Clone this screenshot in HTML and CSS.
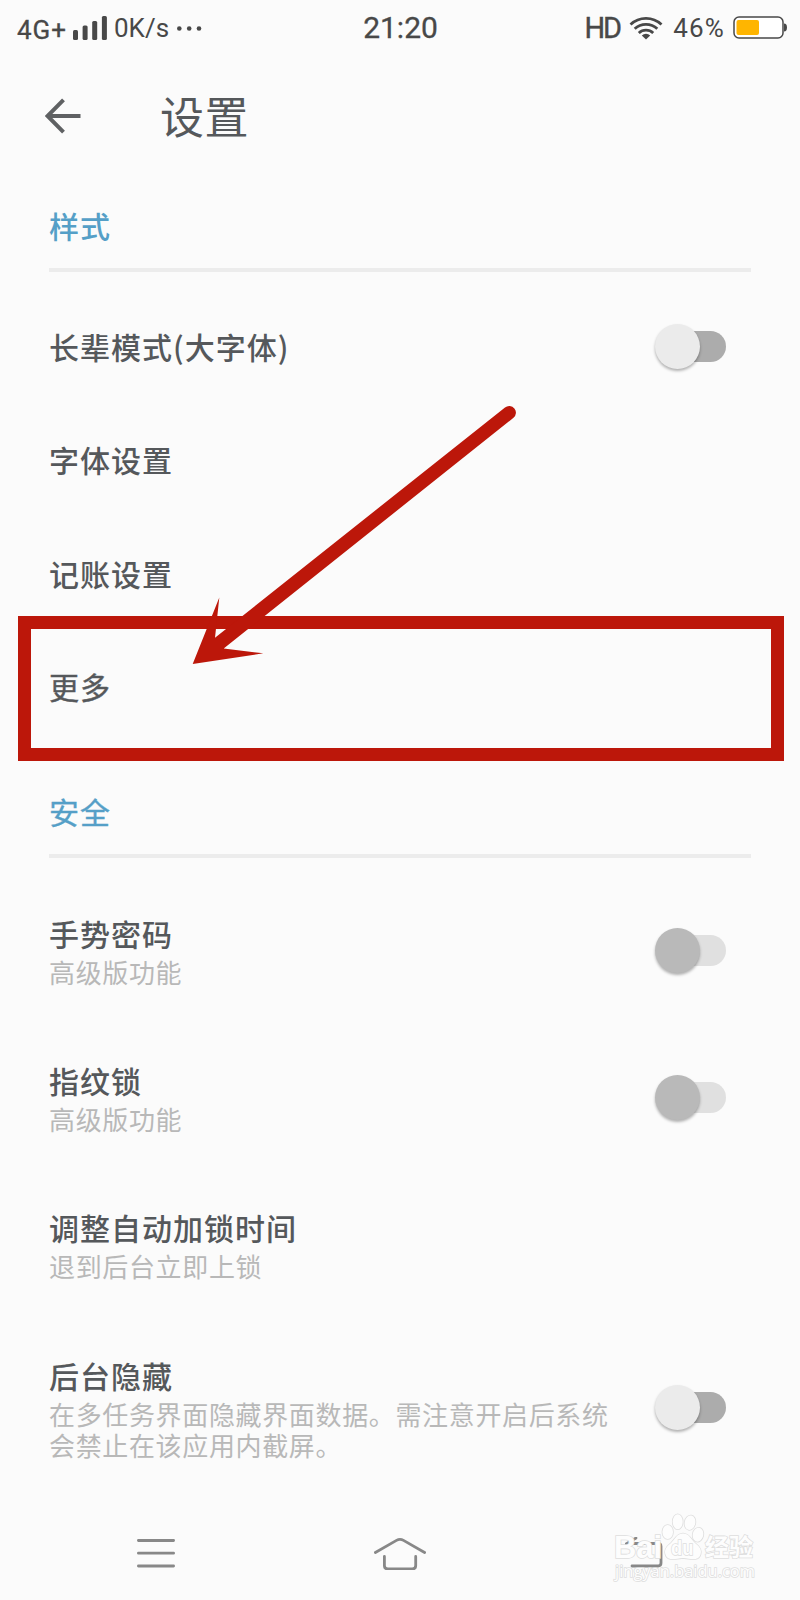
FILE: index.html
```html
<!doctype html>
<html lang="zh-CN">
    <head>
        <meta charset="utf-8">
        <title>设置</title>
        <meta name="viewport" content="width=device-width, initial-scale=1.0" />
        <link rel="stylesheet" href="styles.css">
    </head>
    <body>
        <div class="status-bar">
            <div class="status-left">
                <span class="network">4G+</span>
                <svg class="signal" width="34" height="24" viewBox="0 0 34 24">
                    <rect x="0" y="14" width="5" height="10" rx="1.5"/>
                    <rect x="9.6" y="9.5" width="5" height="14.5" rx="1.5"/>
                    <rect x="19.2" y="5" width="5" height="19" rx="1.5"/>
                    <rect x="28.9" y="0" width="5" height="24" rx="1.5"/>
                </svg>
                <span class="speed">0K/s</span>
                <svg class="dots" width="25" height="5" viewBox="0 0 25 5">
                    <circle cx="2.3" cy="2.5" r="2.3"/>
                    <circle cx="12.2" cy="2.5" r="2.3"/>
                    <circle cx="22" cy="2.5" r="2.3"/>
                </svg>
            </div>
            <span class="clock">21:20</span>
            <div class="status-right">
                <span class="hd">HD</span>
                <svg class="wifi" width="34" height="24" viewBox="0 0 34 24">
                    <path d="M1.5 8.5a22.5 22.5 0 0 1 31 0"/>
                    <path d="M5.7 12.8a16.5 16.5 0 0 1 22.6 0"/>
                    <path d="M9.8 17a10.6 10.6 0 0 1 14.4 0"/>
                    <path class="wifi-dot" d="M17 23.6l-4.2-4.2a6.4 6.4 0 0 1 8.4 0z"/>
                </svg>
                <span class="percent">46%</span>
                <svg class="battery" width="54" height="24" viewBox="0 0 54 24">
                    <rect class="battery-case" x="1" y="1" width="49" height="21" rx="5"/>
                    <rect class="battery-level" x="3.5" y="4" width="22.5" height="15" rx="2"/>
                    <path class="battery-cap" d="M51 7.5c2 0 3 1.500 3 4s-1 4-3 4z"/>
                </svg>
            </div>
        </div>

        <div class="app-bar">
            <svg class="back" width="36" height="36" viewBox="0 0 36 36">
                <path d="M35.500 18H2.500M18.500 1.800L2.500 18l16 16.200"/>
            </svg>
            <h1>设置</h1>
        </div>

        <div class="section">
            <h2>样式</h2>
            <div class="row">
                <div class="title">长辈模式(大字体)</div>
                <div class="switch"><div class="knob"></div></div>
            </div>
            <div class="row"><div class="title">字体设置</div></div>
            <div class="row"><div class="title">记账设置</div></div>
            <div class="row"><div class="title more">更多</div></div>
        </div>

        <div class="section security">
            <h2>安全</h2>
            <div class="row">
                <div class="label">
                    <div class="title">手势密码</div>
                    <div class="summary">高级版功能</div>
                </div>
                <div class="switch disabled"><div class="knob"></div></div>
            </div>
            <div class="row">
                <div class="label">
                    <div class="title">指纹锁</div>
                    <div class="summary">高级版功能</div>
                </div>
                <div class="switch disabled"><div class="knob"></div></div>
            </div>
            <div class="row">
                <div class="label">
                    <div class="title">调整自动加锁时间</div>
                    <div class="summary">退到后台立即上锁</div>
                </div>
            </div>
            <div class="row">
                <div class="label">
                    <div class="title">后台隐藏</div>
                    <div class="summary">在多任务界面隐藏界面数据。需注意开启后系统<br>会禁止在该应用内截屏。</div>
                </div>
                <div class="switch"><div class="knob"></div></div>
            </div>
        </div>

        <div class="nav-bar">
            <svg width="38" height="32" viewBox="0 0 38 32">
                <path d="M1.400 3.500h35.200M1.400 16.200h35.200M1.400 29h35.200"/>
            </svg>
            <svg width="52" height="34" viewBox="0 0 52 34">
                <path d="M1.400 16.500L22.500 4.400q3.500-2 7 0L50.600 16.500M10.400 20.500v9q0 3.500 3.500 3.500h24.300q3.500 0 3.500-3.500v-9"/>
            </svg>
            <svg width="38" height="32" viewBox="0 0 38 32">
                <path d="M11 1L2 6.500h31q3 0 3 3v16.500q0 3-3 3H7"/>
            </svg>
        </div>

        <!-- highlight frame and pointer -->
        <div class="frame"></div>
        <svg class="arrow" width="330" height="270" viewBox="0 0 330 270">
            <path d="M2.700 269L29.300 202.500 25 242.700 315 12.500a6.600 6.600 0 0 1 8.500 10.300L33.700 253.500 73.300 258.300z"/>
        </svg>

        <svg class="watermark" width="150" height="85" viewBox="0 0 150 85">
            <text class="logo" x="4" y="58" textLength="48" lengthAdjust="spacingAndGlyphs">Bai</text>
            <ellipse cx="57.700" cy="32" rx="5.300" ry="7"/>
            <ellipse cx="67.700" cy="21.700" rx="5" ry="7.500"/>
            <ellipse cx="80" cy="22.700" rx="5.300" ry="7.300" transform="rotate(12 80 22.700)"/>
            <ellipse cx="88" cy="34.700" rx="5.300" ry="7" transform="rotate(12 88 34.700)"/>
            <path d="M73 33.500c-6.500 0-8 6-12 9.500-5 4-7 7-5.500 11.500 2 6.500 9 4.500 17.500 3.500 8.500 1 15.500 3 17.500-3.500 1.500-4.500-.5-7.500-5.500-11.500-4-3.500-5.500-9.500-12-9.500z"/>
            <text class="du" x="61" y="55" textLength="22.500" lengthAdjust="spacingAndGlyphs">du</text>
            <text class="cn" x="95" y="56">经验</text>
            <text class="url" x="5" y="77" textLength="140" lengthAdjust="spacingAndGlyphs">jingyan.baidu.com</text>
        </svg>
    </body>
</html>
```

FILE: styles.css
```css
* {
    box-sizing: border-box;
}
body {
    position: relative;
    margin: 0;
    width: 800px;
    height: 1600px;
    overflow: hidden;
    background-color: #fbfbfb;
    color: #55585b;
    font-family: "Noto Sans CJK SC", sans-serif;
}
svg {
    display: block;
    flex: none;
}

/* status bar */
.status-bar {
    display: grid;
    grid-template-columns: 1fr auto 1fr;
    align-items: center;
    height: 56px;
    padding: 0 13px 0 17px;
    color: #484848;
    fill: #484848;
    font-family: Roboto, sans-serif;
    font-size: 25px;
    line-height: 32px;
}
.status-left, .status-right {
    display: flex;
    align-items: center;
}
.status-right {
    justify-content: flex-end;
}
.network {
    width: 56px;
    padding-top: 3px;
    font-size: 26px;
    letter-spacing: 1px;
    -webkit-text-stroke: 0.3px #484848;
}
.speed {
    width: 55px;
    margin-left: 7px;
    font-size: 26px;
}
.dots {
    margin-left: 8px;
}
.clock {
    margin-right: 3px;
    font-size: 30px;
    -webkit-text-stroke: 0.3px #484848;
}
.hd {
    margin-right: 9px;
    font-size: 29px;
    letter-spacing: -2px;
    -webkit-text-stroke: 0.4px #484848;
}
.wifi {
    margin-right: 10px;
    fill: none;
    stroke: #484848;
    stroke-width: 2.8;
}
.wifi .wifi-dot {
    fill: #484848;
    stroke: none;
}
.percent {
    margin-right: 8px;
    font-size: 26px;
    letter-spacing: 1.2px;
}
.battery-case {
    fill: #fff;
    stroke: #484848;
    stroke-width: 1.5;
}
.battery-level {
    fill: #ffb500;
}

.app-bar {
    display: flex;
    align-items: center;
    height: 120px;
    padding-left: 45px;
}
.back {
    fill: none;
    stroke: #5f6163;
    stroke-width: 4;
}
h1 {
    margin: -3px 0 0 79px;
    font-size: 44px;
    font-weight: 400;
    letter-spacing: 0.6px;
    line-height: 60px;
}

/* settings list */
.section {
    padding: 0 49px;
}
h2 {
    height: 96px;
    margin: 0 0 18px;
    padding-top: 27px;
    border-bottom: 4px solid #ececec;
    color: #559fc7;
    font-size: 30px;
    font-weight: 500;
    letter-spacing: 1px;
    line-height: 45px;
}
.row {
    display: flex;
    align-items: center;
    justify-content: space-between;
    height: 113.3px;
    padding-right: 25px;
}
.title {
    font-size: 30px;
    font-weight: 500;
    letter-spacing: 1px;
    line-height: 45px;
    white-space: nowrap;
}
.more {
    font-weight: 400;
    -webkit-text-stroke: 0.4px #55585b;
}
.summary {
    color: #b8b8b8;
    font-size: 26px;
    letter-spacing: 0.65px;
    line-height: 31px;
    white-space: nowrap;
}
.security {
    padding-top: 19px;
}
.security h2 {
    margin-bottom: 17px;
    font-weight: 400;
    -webkit-text-stroke: 0.4px #559fc7;
}
.security .row {
    height: auto;
    padding-top: 35.65px;
    padding-bottom: 35.65px;
}
.switch {
    display: flex;
    align-items: center;
    width: 71px;
    height: 31px;
    background: linear-gradient(#acacac, #acacac) 20px 0 no-repeat;
    border-radius: 16px;
}
.security .switch {
    margin-top: 3px;
}
.knob {
    width: 45px;
    height: 45px;
    border-radius: 50%;
    background-color: #ebebeb;
    box-shadow: 0 2px 3px rgba(0, 0, 0, 0.3);
}
.switch.disabled {
    background: linear-gradient(#e0e0e0, #e0e0e0) 20px 0 no-repeat;
}
.disabled .knob {
    background-color: #b9b9b9;
}

/* system navigation */
.nav-bar {
    position: absolute;
    left: 0;
    bottom: 0;
    display: flex;
    align-items: center;
    justify-content: space-between;
    width: 800px;
    height: 94px;
    padding: 0 137px;
    fill: none;
    stroke: #888;
    stroke-width: 2.8;
    stroke-linecap: round;
}

.frame {
    position: absolute;
    left: 18px;
    top: 616px;
    width: 766px;
    height: 145px;
    border: 13px solid #bc170a;
}
.arrow {
    position: absolute;
    left: 190px;
    top: 395px;
    fill: #bc170a;
}

.watermark {
    position: absolute;
    left: 610px;
    top: 1500px;
    fill: #fdfdfd;
    stroke: #dedede;
    stroke-width: 1.6;
    paint-order: stroke;
    font-family: "Liberation Sans", sans-serif;
}
.watermark .logo {
    font-size: 31px;
    font-weight: 700;
}
.watermark .du {
    font-size: 21px;
    font-weight: 700;
}
.watermark .cn {
    font-family: "Noto Sans CJK SC", sans-serif;
    font-size: 24px;
    font-weight: 700;
}
.watermark .url {
    font-family: "Open Sans", sans-serif;
    font-size: 17px;
}
```
